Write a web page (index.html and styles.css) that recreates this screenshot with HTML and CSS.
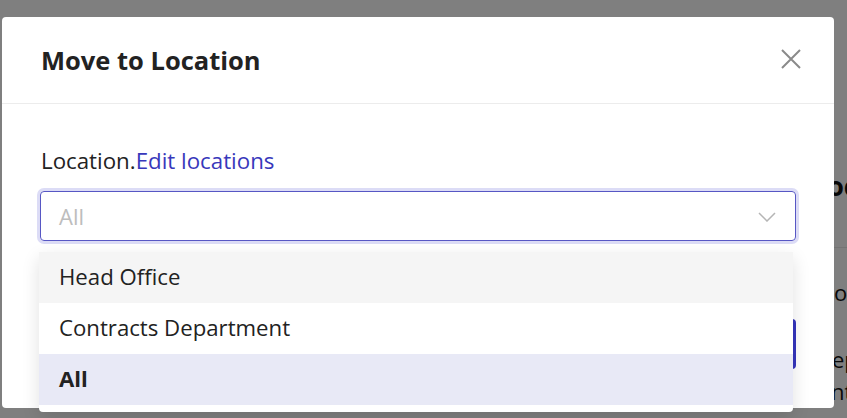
FILE: index.html
```html
<!DOCTYPE html>
<html lang="en">
<head>
<meta charset="utf-8">
<title>Move to Location</title>
<link rel="stylesheet" href="styles.css">
</head>
<body>
<div class="page">
  <div class="page-side">
    <h2 class="page-title">Location</h2>
    <div class="page-rule"></div>
    <p class="page-line page-line-1">or</p>
    <p class="page-line page-line-2">ep</p>
    <p class="page-line page-line-3">nt</p>
  </div>
</div>
<div class="backdrop"></div>
<div class="modal" role="dialog">
  <div class="modal-header">
    <h1 class="modal-title">Move to Location</h1>
    <button class="close" aria-label="Close">
      <svg width="20" height="20" viewBox="0 0 20 20"><path d="M1 1 L19 19 M19 1 L1 19" stroke="#8a8a8a" stroke-width="2" fill="none"/></svg>
    </button>
  </div>
  <div class="modal-body">
    <div class="field-label">Location.<a class="link" href="#">Edit locations</a></div>
    <div class="select-wrap">
      <div class="select">
        <span class="placeholder">All</span>
        <svg class="chevron" width="18" height="10" viewBox="0 0 18 10"><path d="M1 1 L9 9 L17 1" stroke="#b5b5b5" stroke-width="1.5" fill="none"/></svg>
      </div>
      <ul class="menu">
        <li class="item item-hover">Head Office</li>
        <li class="item">Contracts Department</li>
        <li class="item item-selected">All</li>
      </ul>
    </div>
  </div>
  <div class="modal-footer">
    <button class="btn-primary">Move</button>
  </div>
</div>
</body>
</html>
```
FILE: styles.css
```css
html, body {
  margin: 0;
  padding: 0;
}
body {
  width: 847px;
  height: 418px;
  overflow: hidden;
  background: #ffffff;
  font-family: "Open Sans", "Noto Sans", sans-serif;
  color: #222222;
  position: relative;
}
.page {
  display: flex;
  justify-content: flex-end;
  height: 418px;
}
.page-side {
  width: 120px;
  margin-right: -86px;
  padding-top: 168px;
}
.page-title {
  margin: 0;
  font-size: 26px;
  font-weight: 700;
  line-height: 36px;
  color: #111;
}
.page-rule {
  border-top: 1px solid #e8e8e8;
  margin-top: 43px;
  margin-left: 21px;
}
.page-line {
  margin: 0 0 0 21px;
  font-size: 22px;
  line-height: 30px;
  color: #111;
  white-space: nowrap;
}
.page-line-1 { margin-top: 29px; }
.page-line-2 { margin-top: 37px; margin-left: 19px; }
.page-line-3 { margin-top: 2px; margin-left: 18px; }

.backdrop {
  position: absolute;
  inset: 0;
  background: rgba(0, 0, 0, 0.5);
}
.modal {
  position: absolute;
  left: 2px;
  top: 17px;
  width: 832px;
  height: 391px;
  background: #ffffff;
  border-radius: 4px;
  display: flex;
  flex-direction: column;
}
.modal-header {
  height: 86px;
  border-bottom: 1px solid #ececec;
  display: flex;
  align-items: center;
  justify-content: space-between;
  padding: 0 33px 0 39px;
}
.modal-title {
  margin: 0;
  font-size: 25.5px;
  font-weight: 700;
  color: #222222;
}
.close {
  border: 0;
  background: none;
  padding: 0;
  width: 20px;
  height: 20px;
  display: flex;
  margin-top: -2px;
}
.modal-body {
  padding: 42px 38px 0 38px;
}
.field-label {
  font-size: 22.3px;
  line-height: 30px;
  color: #222222;
  padding-left: 1px;
}
.link {
  color: #3838bb;
  text-decoration: none;
}
.select-wrap {
  position: relative;
  margin-top: 15px;
}
.select {
  height: 50px;
  box-sizing: border-box;
  border: 1px solid #5757c4;
  border-radius: 4px;
  box-shadow: 0 0 0 3px #dcdcf6;
  display: flex;
  align-items: center;
  justify-content: space-between;
  padding: 0 19px 0 18px;
}
.placeholder {
  font-size: 22px;
  color: #bdbdbd;
}
.chevron {
  margin-top: 2px;
}
.menu {
  position: absolute;
  top: 61px;
  left: -1px;
  right: 3px;
  margin: 0;
  padding: 0 0 7px 0;
  list-style: none;
  background: #ffffff;
  border-radius: 0 0 4px 4px;
  box-shadow: 0 6px 18px rgba(0, 0, 0, 0.12);
  z-index: 2;
}
.item {
  height: 51px;
  box-sizing: border-box;
  display: flex;
  align-items: center;
  padding: 0 0 2px 20px;
  font-size: 22.2px;
  color: #222222;
}
.item-hover {
  background: #f5f5f5;
}
.item-selected {
  background: #e8e9f6;
  font-weight: 700;
}
.modal-footer {
  display: flex;
  justify-content: flex-end;
  padding: 78px 38px 0 38px;
}
.btn-primary {
  height: 50px;
  width: 120px;
  border: 0;
  border-radius: 4px;
  background: #3535bd;
  color: #fff;
  font-family: inherit;
  font-size: 18px;
  font-weight: 600;
}
```
